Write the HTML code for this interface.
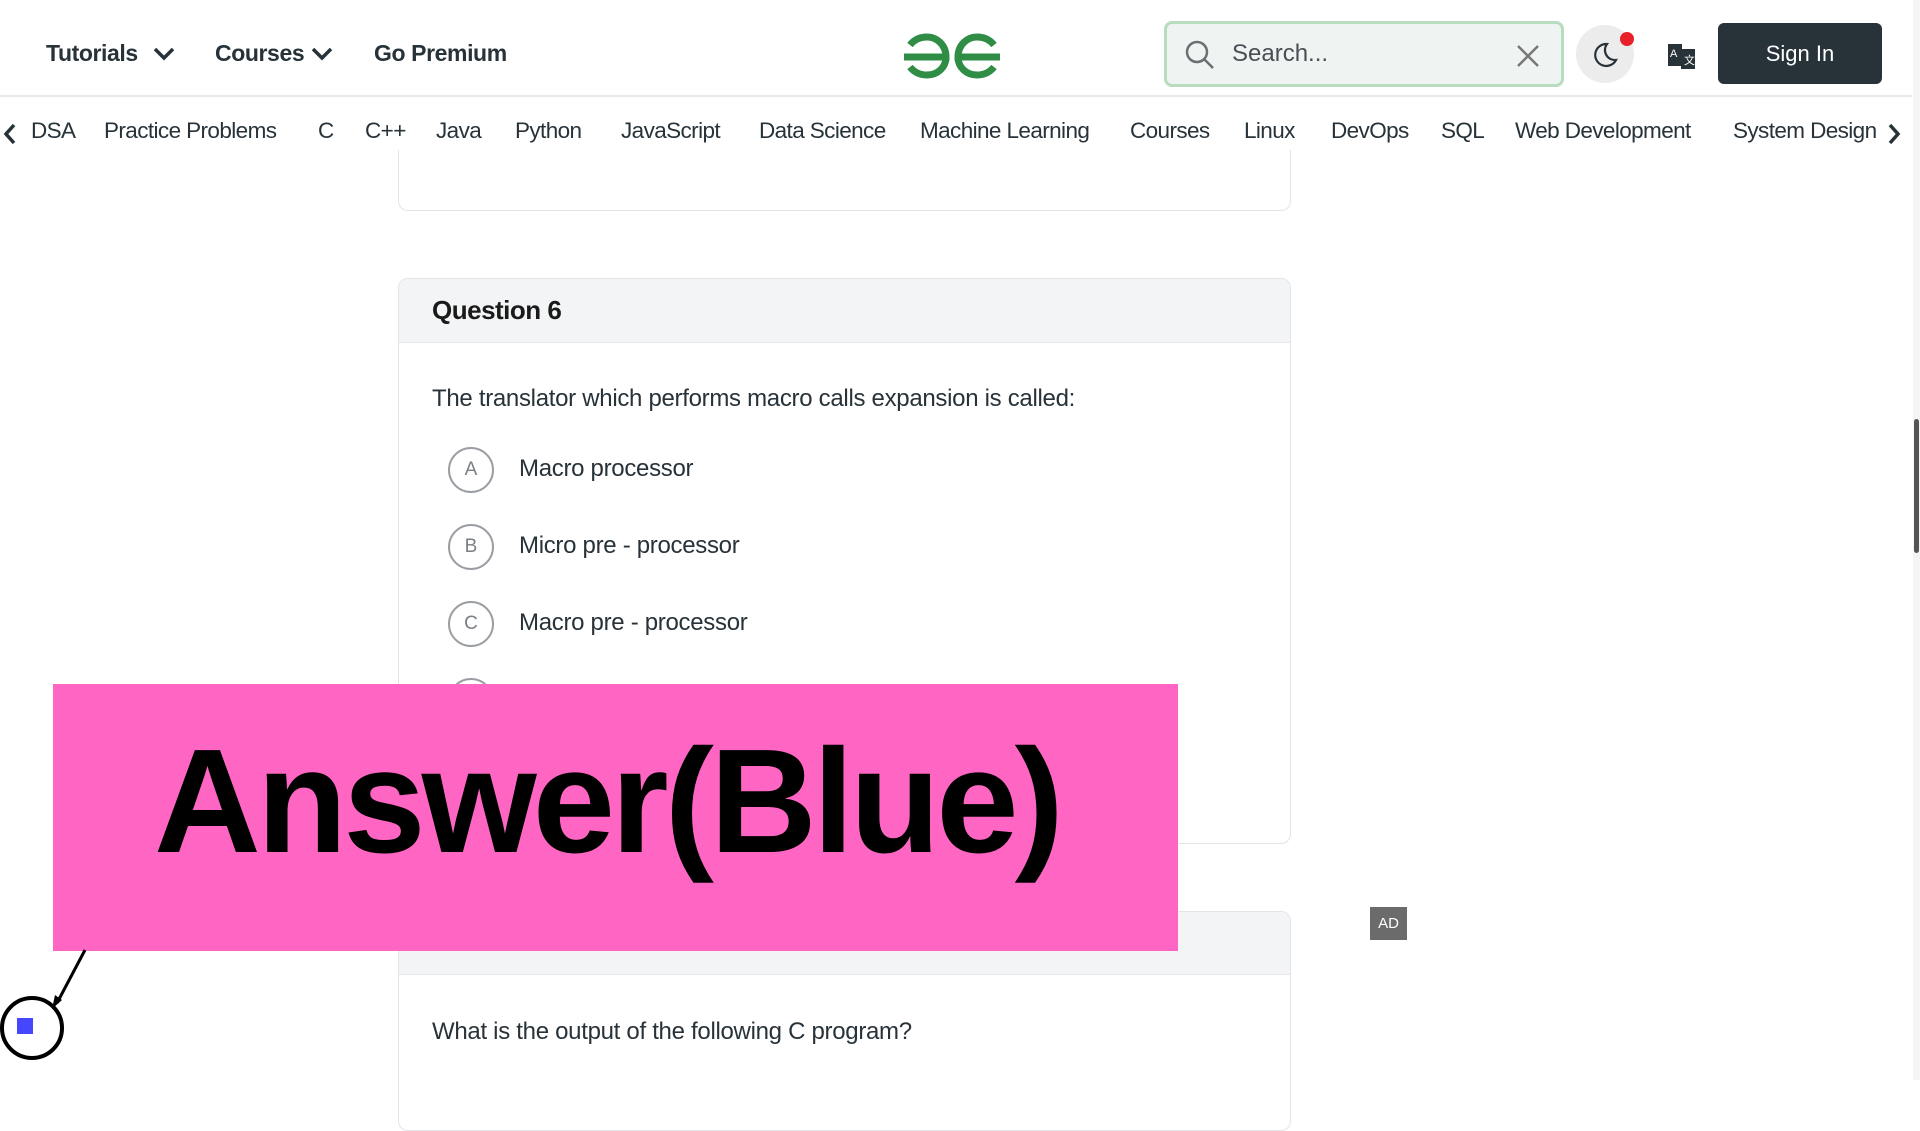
<!DOCTYPE html>
<html><head><meta charset="utf-8"><style>
*{margin:0;padding:0;box-sizing:border-box}
body{width:1920px;height:1080px;overflow:hidden;background:#fff;font-family:"Liberation Sans",sans-serif;color:#273239;position:relative}
.a{position:absolute;white-space:nowrap}
.top{font-size:23px;font-weight:bold;letter-spacing:-0.4px;top:40px}
.nav{font-size:22.5px;top:118px;letter-spacing:-0.6px;color:#273239}
.card{position:absolute;left:398px;width:893px;border:1px solid #e3e4e6;border-radius:10px;background:#fff;overflow:hidden}
.hd{background:#f3f4f6;border-bottom:1px solid #e8e8e8}
.opt{position:absolute;left:448px;width:46px;height:46px;border:2px solid #9a9ea3;border-radius:50%;text-align:center;line-height:42px;font-size:19px;color:#7a7f85}
.ot{position:absolute;left:519px;font-size:24px;letter-spacing:-0.3px}
</style></head><body>
<div class="a top" style="left:46px">Tutorials</div>
<svg class="a" style="left:152px;top:46px" width="24" height="16"><path d="M3 3l9 9 9-9" stroke="#273239" stroke-width="3.5" fill="none"/></svg>
<div class="a top" style="left:215px">Courses</div>
<svg class="a" style="left:310px;top:46px" width="24" height="16"><path d="M3 3l9 9 9-9" stroke="#273239" stroke-width="3.5" fill="none"/></svg>
<div class="a top" style="left:374px">Go Premium</div>
<svg class="a" style="left:900px;top:32px" width="104" height="48" viewBox="0 0 104 48"><g fill="none" stroke="#2f8d46" stroke-width="7"><path d="M4 25h42C46 13 37 5 27 5 20 5 14 8 10 13M46 25c0 10-8 18-19 18-7 0-13-3-17-8"/><path d="M100 25H58C58 13 67 5 77 5c7 0 13 3 17 8M58 25c0 10 8 18 19 18 7 0 13-3 17-8"/></g></svg>
<div class="a" style="left:1164px;top:21px;width:400px;height:66px;border:3px solid #b9dbbf;border-radius:8px;background:#eff3f2"></div>
<svg class="a" style="left:1183px;top:38px" width="34" height="34"><circle cx="14" cy="14" r="10" stroke="#6a6f73" stroke-width="2.5" fill="none"/><path d="M21 21l9 9" stroke="#6a6f73" stroke-width="2.5"/></svg>
<div class="a" style="left:1232px;top:40px;font-size:24px;color:#4a4f55">Search...</div>
<svg class="a" style="left:1516px;top:44px" width="24" height="24"><path d="M2 2l20 20M22 2L2 22" stroke="#777" stroke-width="2.5"/></svg>
<div class="a" style="left:1576px;top:25px;width:58px;height:58px;border-radius:50%;background:#ececec"></div>
<svg class="a" style="left:1590px;top:40px" width="30" height="30"><path d="M17 4a11 11 0 1 0 9 16A10 10 0 0 1 17 4z" stroke="#273239" stroke-width="2.2" fill="none"/></svg>
<div class="a" style="left:1620px;top:32px;width:14px;height:14px;border-radius:50%;background:#e8202a"></div>
<svg class="a" style="left:1667px;top:42px" width="30" height="28"><rect x="1" y="2" width="14" height="22" fill="#273239"/><rect x="14" y="7" width="14" height="20" fill="#273239"/><text x="3" y="15" font-size="11" fill="#fff" font-family="Liberation Sans">A</text><text x="17" y="22" font-size="11" fill="#fff" font-family="Liberation Sans">文</text></svg>
<div class="a" style="left:1718px;top:23px;width:164px;height:61px;background:#273239;border-radius:6px;color:#fff;font-size:22px;text-align:center;line-height:61px">Sign In</div>
<div class="a" style="left:0;top:95px;width:1912px;height:2px;background:#e8e8e8"></div>
<svg class="a" style="left:2px;top:123px" width="16" height="22"><path d="M12 2L4 11l8 9" stroke="#273239" stroke-width="3.5" fill="none"/></svg>
<svg class="a" style="left:1886px;top:123px" width="16" height="22"><path d="M4 2l8 9-8 9" stroke="#273239" stroke-width="3.5" fill="none"/></svg>
<div class="a nav" style="left:31px">DSA</div>
<div class="a nav" style="left:104px">Practice Problems</div>
<div class="a nav" style="left:318px">C</div>
<div class="a nav" style="left:365px">C++</div>
<div class="a nav" style="left:436px">Java</div>
<div class="a nav" style="left:515px">Python</div>
<div class="a nav" style="left:621px">JavaScript</div>
<div class="a nav" style="left:759px">Data Science</div>
<div class="a nav" style="left:920px">Machine Learning</div>
<div class="a nav" style="left:1130px">Courses</div>
<div class="a nav" style="left:1244px">Linux</div>
<div class="a nav" style="left:1331px">DevOps</div>
<div class="a nav" style="left:1441px">SQL</div>
<div class="a nav" style="left:1515px">Web Development</div>
<div class="a nav" style="left:1733px">System Design</div>
<div class="a" style="left:1913px;top:0;width:7px;height:1080px;background:#f5f5f5"></div>
<div class="a" style="left:1914px;top:419px;width:5px;height:134px;background:#555;border-radius:3px"></div>
<div class="card" style="top:150px;height:61px;border-top:none;border-radius:0 0 10px 10px"></div>
<div class="card" style="top:278px;height:566px"><div class="hd" style="height:64px"></div></div>
<div class="a" style="left:432px;top:295px;font-size:26px;font-weight:bold;letter-spacing:-0.5px;color:#1a1a1a">Question 6</div>
<div class="a" style="left:432px;top:385px;font-size:24px;letter-spacing:-0.3px">The translator which performs macro calls expansion is called:</div>
<div class="opt" style="top:447px">A</div><div class="ot" style="top:455px">Macro processor</div>
<div class="opt" style="top:524px">B</div><div class="ot" style="top:532px">Micro pre - processor</div>
<div class="opt" style="top:601px">C</div><div class="ot" style="top:609px">Macro pre - processor</div>
<div class="opt" style="top:678px">D</div>
<div class="card" style="top:911px;height:220px"><div class="hd" style="height:63px"></div></div>
<div class="a" style="left:432px;top:1018px;font-size:24px;letter-spacing:-0.3px">What is the output of the following C program?</div>
<div class="a" style="left:1370px;top:907px;width:37px;height:33px;background:#6b6b6b;color:#fff;font-size:15px;text-align:center;line-height:33px">AD</div>
<div class="a" style="left:53px;top:684px;width:1125px;height:267px;background:#ff66c4"></div>
<div class="a" style="left:154px;top:712px;font-size:148px;font-weight:bold;letter-spacing:-4px;color:#000;line-height:180px">Answer(Blue)</div>
<svg class="a" style="left:0;top:945px" width="100" height="135"><path d="M85 5L57 58" stroke="#000" stroke-width="3"/><path d="M52 64l3-14 7 5z" fill="#000"/><circle cx="32" cy="83" r="30" stroke="#000" stroke-width="4" fill="none"/><rect x="17" y="73" width="16" height="16" fill="#4646ff"/></svg>
</body></html>
